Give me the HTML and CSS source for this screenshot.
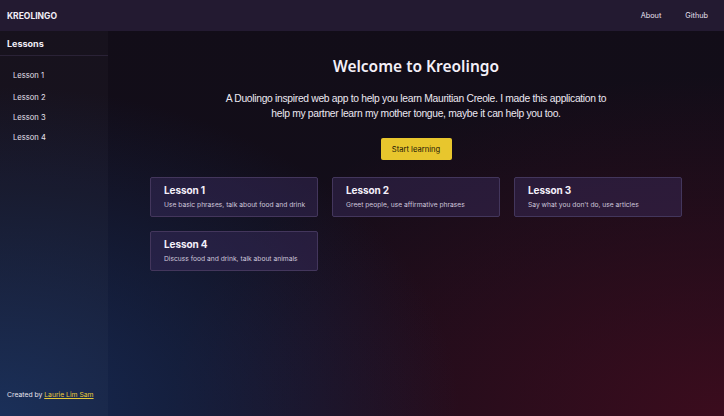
FILE: index.html
```html
<!DOCTYPE html>
<html lang="en">
<head>
<meta charset="utf-8">
<title>Kreolingo</title>
<link rel="stylesheet" href="styles.css">
</head>
<body>
<div class="app">
  <header class="topbar">
    <div class="brand">KREOLINGO</div>
    <nav class="topnav">
      <a href="#">About</a>
      <a href="#">Github</a>
    </nav>
  </header>
  <div class="body">
    <aside class="sidebar">
      <div class="side-title">Lessons</div>
      <ul class="side-list">
        <li class="first">Lesson 1</li>
        <li>Lesson 2</li>
        <li>Lesson 3</li>
        <li>Lesson 4</li>
      </ul>
      <div class="credit">Created by <a href="#">Laurie Lim Sam</a></div>
    </aside>
    <main class="main">
      <h1 class="title">Welcome to Kreolingo</h1>
      <p class="intro">A Duolingo inspired web app to help you learn Mauritian Creole. I made this application to help my partner learn my mother tongue, maybe it can help you too.</p>
      <button class="cta">Start learning</button>
      <div class="cards">
        <div class="card"><h2>Lesson 1</h2><p>Use basic phrases, talk about food and drink</p></div>
        <div class="card"><h2>Lesson 2</h2><p>Greet people, use affirmative phrases</p></div>
        <div class="card"><h2>Lesson 3</h2><p>Say what you don't do, use articles</p></div>
        <div class="card"><h2>Lesson 4</h2><p>Discuss food and drink, talk about animals</p></div>
      </div>
    </main>
  </div>
</div>
</body>
</html>
```

FILE: styles.css
```css
* { box-sizing: border-box; }
html, body { margin: 0; height: 100%; }
body {
  font-family: Inter, "Noto Sans", sans-serif;
  color: #f2eef8;
  background-color: #110c17;
  background-image:
    radial-gradient(ellipse 460px 330px at 0% 100%, rgba(22,50,100,0.8), rgba(22,50,100,0) 100%),
    radial-gradient(ellipse 560px 340px at 100% 100%, rgba(66,12,30,0.85), rgba(66,12,30,0) 100%),
    linear-gradient(180deg, #120d18 0%, #130d1a 100%);
  overflow: hidden;
}
.app { height: 416px; display: flex; flex-direction: column; }
.topbar {
  height: 31px;
  flex: none;
  background: #231a31;
  display: flex;
  align-items: center;
  justify-content: space-between;
  padding: 0 16px 0 7px;
}
.brand { font-weight: 700; font-size: 8.5px; color: #f1edf6; }
.topnav { display: flex; gap: 24px; }
.topnav a { color: #e8e2f0; text-decoration: none; font-size: 7.3px; }
.body { flex: 1; display: flex; min-height: 0; }
.sidebar {
  width: 108px;
  flex: none;
  display: flex;
  flex-direction: column;
  background: rgba(255,255,255,0.025);
}
.side-title {
  font-weight: 700;
  font-size: 9px;
  padding: 7px 7px 0;
  height: 25px;
  border-bottom: 1px solid #2a2236;
  color: #f1edf6;
}
.side-list { list-style: none; margin: 0; padding: 0 0 0 13px; flex: 1; }
.side-list li { font-size: 7.6px; height: 20px; line-height: 20px; color: #e6e1ee; }
.side-list li.first { margin-top: 10px; height: 22px; }
.credit { font-size: 6.8px; padding: 0 0 17px 7px; color: #e8e4ee; }
.credit a { color: #e7c93a; text-decoration: underline; }
.main { flex: 1; display: flex; flex-direction: column; align-items: center; padding-top: 25px; }
.title {
  font-family: "Noto Sans", "Open Sans", sans-serif;
  font-weight: 600;
  font-size: 15.5px;
  margin: 0;
  line-height: 20px;
  color: #f4f0f8;
}
.intro {
  width: 388px;
  text-align: center;
  font-family: "Liberation Sans", Arial, sans-serif;
  font-size: 10.3px;
  letter-spacing: -0.3px;
  line-height: 15px;
  margin: 15px 0 0;
  color: #ece8f2;
}
.cta {
  margin-top: 17px;
  height: 22px;
  width: 71px;
  border: none;
  border-radius: 2px;
  background: #e8c62d;
  color: #1e1708;
  font-family: Inter, sans-serif;
  font-size: 7.6px;
  padding: 0;
}
.cards {
  margin-top: 17px;
  display: grid;
  grid-template-columns: repeat(3, 168px);
  gap: 14px;
}
.card {
  height: 40px;
  border: 1px solid #43365c;
  border-radius: 2px;
  background: rgba(60,45,95,0.45);
  padding: 6px 0 0 13px;
}
.card h2 { margin: 0; font-size: 10px; font-weight: 700; line-height: 13px; color: #f4f0fa; letter-spacing: -0.1px; }
.card p { margin: 4px 0 0; font-size: 6.7px; line-height: 9px; color: #cfc7dc; }
```
